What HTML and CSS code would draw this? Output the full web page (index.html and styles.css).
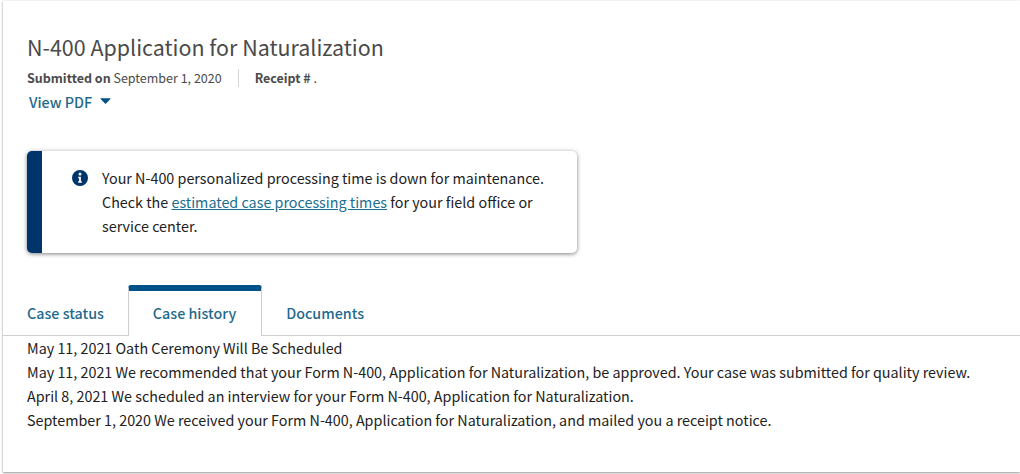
FILE: index.html
```html
<!DOCTYPE html>
<html lang="en">
<head>
<meta charset="utf-8">
<title>N-400 Application for Naturalization</title>
<link rel="stylesheet" href="styles.css">
</head>
<body>
<main class="card">
  <header class="head">
    <h1 class="title">N-400 Application for Naturalization</h1>
    <div class="meta">
      <span class="meta-item"><b>Submitted on</b> September 1, 2020</span>
      <span class="meta-sep"></span>
      <span class="meta-item"><b>Receipt #</b> .</span>
    </div>
    <a class="pdf" href="#">View PDF
      <svg class="caret" viewBox="0 0 12 7" aria-hidden="true"><path d="M0.6 0.4h10.8a.5.5 0 0 1 .35.85L6.35 6.6a.5.5 0 0 1-.7 0L.25 1.25A.5.5 0 0 1 .6.4z"/></svg>
    </a>
  </header>
  <section class="alert">
    <svg class="info" viewBox="0 0 16 16" aria-hidden="true"><path fill-rule="evenodd" d="M8 0a8 8 0 1 1 0 16A8 8 0 0 1 8 0zm0 2.6a1.5 1.5 0 1 0 0 3 1.5 1.5 0 0 0 0-3zM6.2 6.8v1.5h.9v3H6.2v1.5h3.6v-1.5h-.9V6.8z"/></svg>
    <p class="alert-text">Your N-400 personalized processing time is down for maintenance. Check the <a href="#">estimated case processing times</a> for your field office or service center.</p>
  </section>
  <nav class="tabs">
    <a class="tab" href="#">Case status</a>
    <a class="tab tab-active" href="#">Case history</a>
    <a class="tab" href="#">Documents</a>
  </nav>
  <ul class="history">
    <li>May 11, 2021 Oath Ceremony Will Be Scheduled</li>
    <li>May 11, 2021 We recommended that your Form N-400, Application for Naturalization, be approved. Your case was submitted for quality review.</li>
    <li>April 8, 2021 We scheduled an interview for your Form N-400, Application for Naturalization.</li>
    <li>September 1, 2020 We received your Form N-400, Application for Naturalization, and mailed you a receipt notice.</li>
  </ul>
</main>
</body>
</html>
```
FILE: styles.css
```css
* { box-sizing: border-box; }
html, body { margin: 0; padding: 0; background: #fff; }
body {
  width: 1020px;
  height: 474px;
  overflow: hidden;
  font-family: "Noto Sans CJK SC", "Noto Sans", sans-serif;
  color: #212121;
}
.card {
  margin: 1px 0 0 3px;
  height: 471px;
  background: #fff;
  box-shadow: 0 1px 2px rgba(0,0,0,.4), 0 0 3px rgba(0,0,0,.08);
}
.head { padding: 31px 24px 0; }
.title {
  margin: 0;
  font-size: 21.45px;
  line-height: 30px;
  font-weight: 400;
  color: #4a4a4a;
}
.meta {
  display: flex;
  align-items: center;
  margin-top: 7px;
  height: 18px;
  font-size: 12.5px;
  line-height: 18px;
  color: #4a4a4a;
}
.meta b { font-weight: 700; }
.meta-sep {
  width: 1px;
  height: 18px;
  background: #d6d6d6;
  margin: 0 16px;
}
.pdf {
  display: flex;
  align-items: center;
  gap: 8px;
  margin: 4px 0 0 2px;
  width: max-content;
  height: 22px;
  font-size: 14.3px;
  line-height: 22px;
  font-weight: 500;
  color: #1f6a8c;
  text-decoration: none;
}
.caret { width: 11px; height: 6px; fill: #005288; margin-bottom: 2px; }
.alert {
  display: flex;
  align-items: flex-start;
  width: 550px;
  height: 102px;
  margin: 38px 0 0 24px;
  padding: 15px 30px 0 30px;
  background: #fff;
  border-left: 15px solid #00356b;
  border-radius: 5px;
  box-shadow: 0 1px 4px rgba(0,0,0,.5);
}
.info { flex: none; width: 16px; height: 16px; margin-top: 4px; fill: #00356b; }
.alert-text {
  margin: 0 0 0 14px;
  font-size: 14.33px;
  line-height: 24px;
  color: #212121;
}
.alert-text a { color: #1a6e8e; }
.tabs {
  display: flex;
  align-items: flex-end;
  height: 51px;
  margin-top: 32px;
  border-bottom: 1px solid #cfcfcf;
}
.tab {
  height: 50px;
  padding: 18px 24px 0;
  font-size: 14.3px;
  line-height: 20px;
  font-weight: 500;
  color: #1f6a8c;
  text-decoration: none;
}
.tab-active {
  height: 51px;
  margin-bottom: -1px;
  background: #fff;
  border-left: 1px solid #cfcfcf;
  border-right: 1px solid #cfcfcf;
  border-top: 6px solid #005288;
  border-radius: 3px 3px 0 0;
  padding: 12px 25px 0 24px;
}
.history {
  list-style: none;
  margin: 0;
  padding: 0 24px;
  font-size: 14.33px;
  line-height: 24px;
  color: #212121;
}
```
